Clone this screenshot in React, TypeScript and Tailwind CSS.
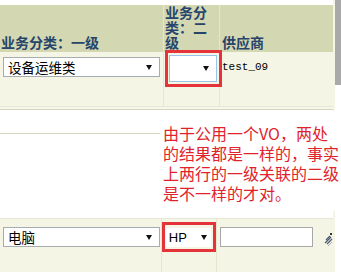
import React from "react";

const Arrow = () => (
  <svg width="6" height="5" viewBox="0 0 6 5" className="shrink-0">
    <polygon points="0,0 6,0 3,5" fill="#111" />
  </svg>
);

export default function App() {
  return (
    <div className="relative w-[341px] h-[272px] overflow-hidden bg-white flex font-['Noto_Sans_CJK_SC',sans-serif]">
      <div className="w-[333px] flex flex-col">
        <div className="h-[5px] shrink-0" />
        {/* header */}
        <div className="flex h-[47px] shrink-0 bg-[#d3d7b2] text-[#27456b] font-bold text-[14px] leading-[15px]">
          <div className="w-[163px] flex items-end pb-[2px] pl-[1px]">业务分类：一级</div>
          <div className="w-px bg-[#e4e7d0]" />
          <div className="w-[55px] flex items-end pb-[2px] pl-[1px]">业务分类：二级</div>
          <div className="w-px bg-[#e4e7d0]" />
          <div className="flex-1 flex items-end pb-[2px] pl-[2px]">供应商</div>
        </div>
        {/* row 1 */}
        <div className="flex h-[54px] shrink-0 bg-[#f4f5e4]">
          <div className="w-[163px] pl-[3px] pt-[5px]">
            <div className="w-[157px] h-[20px] bg-white border border-[#a5acb2] flex items-center justify-between pl-[4px] pr-[7px] text-[13.5px] text-black">
              <span>设备运维类</span>
              <Arrow />
            </div>
          </div>
          <div className="w-px bg-[#e4e7d0]" />
          <div className="w-[55px] relative">
            <div className="absolute left-[1px] top-[-2px] w-[57px] h-[37px] border-[3px] border-[#e5333a] pl-[1px] pt-[2px]">
              <div className="w-[48px] h-[27px] bg-white border border-[#9cc3ea] flex items-center justify-end pr-[7px]">
                <Arrow />
              </div>
            </div>
          </div>
          <div className="w-px bg-[#e4e7d0]" />
          <div className="flex-1 pl-[2px] pt-[9px] font-['Liberation_Mono',monospace] text-[11px] leading-[13px] text-black">
            test_09
          </div>
        </div>
        <div className="h-px shrink-0 bg-[#e6e8d3]" />
        <div className="h-[2px] shrink-0 bg-[#f7f8ec]" />
        <div className="h-px shrink-0 bg-[#d4d6bd]" />
        {/* row 2 */}
        <div className="h-[23px] shrink-0 bg-white" />
        <div className="h-px shrink-0 bg-[#d6d8c2]" />
        <div className="h-[84px] shrink-0 bg-white" />
        {/* row 3 */}
        <div className="h-px shrink-0 bg-[#e6e8d6]" />
        <div className="flex flex-1 bg-[#f4f5e4]">
          <div className="w-[163px] pl-[3px] pt-[8px]">
            <div className="w-[157px] h-[20px] bg-white border border-[#a5acb2] flex items-center justify-between pl-[4px] pr-[7px] text-[13.5px] text-black">
              <span>电脑</span>
              <Arrow />
            </div>
          </div>
          <div className="w-px bg-[#e4e7d0]" />
          <div className="w-[55px] relative">
            <div className="absolute left-0 top-[3px] w-[54px] h-[30px] border-[3px] border-[#e5333a] pl-[1px] pt-[3px]">
              <div className="w-[45px] h-[19px] bg-white flex items-center justify-between pl-[3px] pr-[4px] font-['Liberation_Sans',sans-serif] text-[13px] text-black">
                <span>HP</span>
                <Arrow />
              </div>
            </div>
          </div>
          <div className="w-px bg-[#e4e7d0]" />
          <div className="flex-1 flex items-start pl-[3px] pt-[8px]">
            <div className="w-[93px] h-[20px] bg-white border border-[#a8a8a8]" />
            <svg width="9" height="13" viewBox="0 0 9 13" className="ml-[11px] mt-[6px]">
              <rect x="6" y="0" width="2" height="2" fill="#333" />
              <line x1="2" y1="7" x2="6" y2="3" stroke="#4a5a70" strokeWidth="1.3" />
              <line x1="1" y1="10" x2="7" y2="4" stroke="#4a5a70" strokeWidth="1.3" />
              <line x1="3" y1="11" x2="8" y2="6" stroke="#4a5a70" strokeWidth="1.3" />
              <line x1="4" y1="13" x2="8" y2="9" stroke="#9ab" strokeWidth="1" />
            </svg>
          </div>
        </div>
      </div>
      <div className="w-[8px] flex">
        <div className="w-[2px] bg-[#f4f5e4]" />
        <div className="flex-1 flex flex-col">
          <div className="h-[85px] bg-[#a9a9a9]" />
        </div>
      </div>
      {/* annotation overlay */}
      <div className="absolute left-[160px] top-[111px] w-[181px] h-[100px] bg-white pl-[3px] pt-[12px] text-[#e0232b] text-[16px] leading-[20px] whitespace-nowrap flex flex-col">
        <div className="h-[20px]">由于公用一个VO，两处</div>
        <div className="h-[20px]">的结果都是一样的，事实</div>
        <div className="h-[20px]">上两行的一级关联的二级</div>
        <div className="h-[19px]">是不一样的才对。</div>
      </div>
    </div>
  );
}
